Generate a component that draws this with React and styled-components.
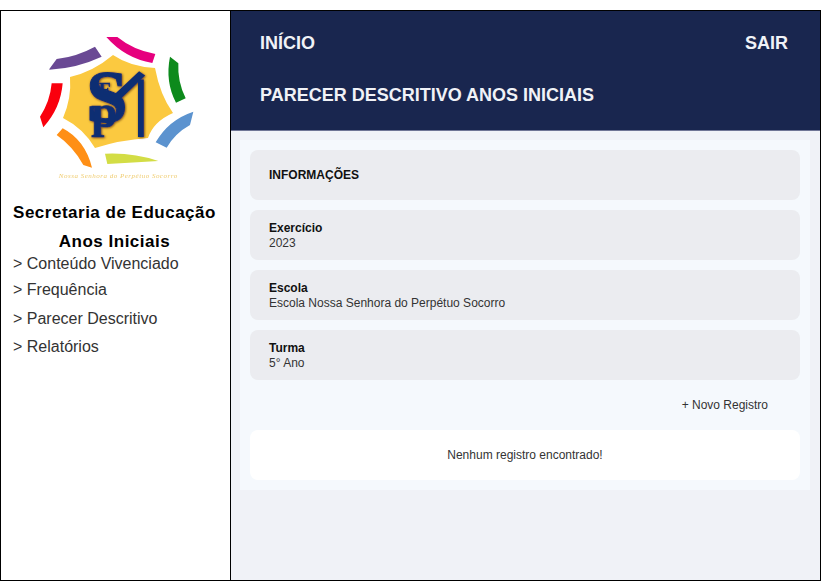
import React from 'react';
import styled, { createGlobalStyle } from 'styled-components';

const GlobalStyle = createGlobalStyle`
  html, body { margin: 0; padding: 0; background: #fff; }
  body { font-family: "Liberation Sans", Arial, sans-serif; }
`;

const Shell = styled.div`
  box-sizing: border-box;
  width: 821px;
  height: 571px;
  margin-top: 10px;
  border: 1px solid #000;
  display: flex;
`;

const Sidebar = styled.aside`
  box-sizing: border-box;
  width: 230px;
  flex: none;
  border-right: 1px solid #000;
  background: #fff;
  display: flex;
  flex-direction: column;
`;

const LogoWrap = styled.div`
  height: 187px;
  padding: 14px 0 0 29px;
  box-sizing: border-box;
`;

const SideTitle = styled.h2`
  margin: 0;
  padding-right: 2px;
  font-size: 17px;
  font-weight: 700;
  line-height: 29px;
  text-align: center;
  color: #000;
  letter-spacing: 0.5px;
`;

const Nav = styled.nav`
  display: flex;
  flex-direction: column;
  padding-left: 12px;
`;

const NavItem = styled.a`
  font-size: 16px;
  line-height: 20px;
  color: #333;
  margin-top: ${p => p.$gap}px;
`;

const Content = styled.div`
  flex: 1;
  display: flex;
  flex-direction: column;
  background: #f0f2f7;
`;

const Header = styled.header`
  box-sizing: border-box;
  height: 119px;
  background: #19264f;
  box-shadow: 0 1px 0 #6f7595;
  padding: 0 32px 0 29px;
  color: #f0f2f7;
  font-weight: 700;
  font-size: 18px;
`;

const HeaderRow = styled.div`
  height: 52px;
  display: flex;
  align-items: center;
  justify-content: space-between;
  &:first-child { margin-top: 6px; }
`;

const Main = styled.main`
  padding: 10px 10px 10px 9px;
`;

const Panel = styled.section`
  background: #f5f9fd;
  padding: 10px;
  display: flex;
  flex-direction: column;
  gap: 10px;
`;

const Card = styled.div`
  box-sizing: border-box;
  height: 50px;
  border-radius: 8px;
  background: ${p => (p.$white ? '#fff' : '#ebecf0')};
  padding: ${p => (p.$stacked ? '2px' : '0')} 19px 0;
  display: flex;
  flex-direction: column;
  justify-content: center;
  align-items: ${p => (p.$white ? 'center' : 'flex-start')};
  font-size: 12px;
  line-height: 15px;
  color: #333;
`;

const Label = styled.strong`
  font-weight: 700;
  color: #111;
`;

const ActionRow = styled.div`
  height: 30px;
  display: flex;
  align-items: center;
  justify-content: flex-end;
  padding-right: 32px;
`;

const NewLink = styled.a`
  font-size: 12px;
  color: #333;
`;

const Logo = () => (
  <svg width="180" height="165" viewBox="0 0 540 495">
    <defs>
      <filter id="soft"><feGaussianBlur stdDeviation="1.5" /></filter>
      <filter id="caption"><feGaussianBlur stdDeviation="0.7" /></filter>
      <filter id="mono" x="-20%" y="-20%" width="140%" height="140%">
        <feDropShadow dx="2" dy="2" stdDeviation="2.5" floodColor="#6b3f12" />
      </filter>
    </defs>
    <g filter="url(#soft)">
      <path fill="#fbc93f" d="M249,90 Q300,125 375,129 Q390,210 429,264 Q370,290 354,339 Q270,345 195,369 Q160,310 99,279 Q125,220 120,156 Q190,140 249,90 Z" />
      <path fill="#6a4a94" d="M58,132 L80,102 Q140,95 195,65 L215,95 Q140,130 58,134 Z" />
      <path fill="#e6007e" d="M229,36 L262,36 Q310,75 376,87 L367,114 Q285,100 229,36 Z" />
      <path fill="#0a8a1a" d="M420,95 L445,115 Q442,170 467,220 L438,233 Q405,170 420,95 Z" />
      <path fill="#5b93cf" d="M490,260 L480,300 Q435,325 410,368 L377,352 Q415,285 490,260 Z" />
      <path fill="#d3dd45" d="M225,386 Q310,382 385,408 Q310,412 232,417 Z" />
      <path fill="#ff8f14" d="M98,310 Q165,345 186,428 L160,420 Q130,365 80,330 Z" />
      <path fill="#fa0010" d="M65,175 L98,175 Q92,250 40,307 L30,275 Q60,230 65,175 Z" />
    </g>
    <g filter="url(#mono)" fill="#0f2f73" stroke="#0f2f73" fontFamily='"Liberation Serif", serif' fontWeight="700">
      <text x="168" y="290" fontSize="225" strokeWidth="3">S</text>
      <text x="206" y="214" fontSize="58" strokeWidth="1">E</text>
      <text x="184" y="305" fontSize="140" strokeWidth="2">p</text>
      <text x="295" y="230" fontSize="135" textAnchor="middle" strokeWidth="7" fontFamily='"Liberation Sans", sans-serif' transform="rotate(36 295 185)">/</text>
      <text x="316" y="336" fontSize="250" strokeWidth="0" fontFamily='"Liberation Sans", sans-serif' textLength="34" lengthAdjust="spacingAndGlyphs">I</text>
    </g>
    <text x="264" y="458" textAnchor="middle" fill="#f0cd72" fontSize="21" fontStyle="italic" filter="url(#caption)" fontFamily='"Liberation Serif", serif' textLength="355">Nossa Senhora do Perpétuo Socorro</text>
  </svg>
);

export default function App() {
  return (
    <>
      <GlobalStyle />
      <Shell>
        <Sidebar>
          <LogoWrap><Logo /></LogoWrap>
          <SideTitle>Secretaria de Educação<br />Anos Iniciais</SideTitle>
          <Nav>
            <NavItem $gap={-2}>&gt; Conteúdo Vivenciado</NavItem>
            <NavItem $gap={6}>&gt; Frequência</NavItem>
            <NavItem $gap={9}>&gt; Parecer Descritivo</NavItem>
            <NavItem $gap={8}>&gt; Relatórios</NavItem>
          </Nav>
        </Sidebar>
        <Content>
          <Header>
            <HeaderRow><span>INÍCIO</span><span>SAIR</span></HeaderRow>
            <HeaderRow><span>PARECER DESCRITIVO ANOS INICIAIS</span></HeaderRow>
          </Header>
          <Main>
            <Panel>
              <Card><Label>INFORMAÇÕES</Label></Card>
              <Card $stacked><Label>Exercício</Label><span>2023</span></Card>
              <Card $stacked><Label>Escola</Label><span>Escola Nossa Senhora do Perpétuo Socorro</span></Card>
              <Card $stacked><Label>Turma</Label><span>5° Ano</span></Card>
              <ActionRow><NewLink>+ Novo Registro</NewLink></ActionRow>
              <Card $white><span>Nenhum registro encontrado!</span></Card>
            </Panel>
          </Main>
        </Content>
      </Shell>
    </>
  );
}
